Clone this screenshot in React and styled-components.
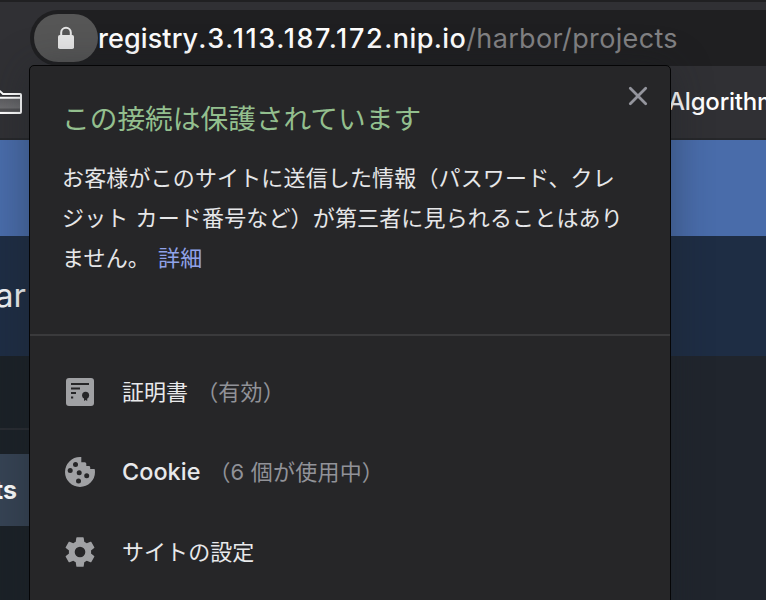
import React from "react";
import styled, { createGlobalStyle } from "styled-components";

const Global = createGlobalStyle`
  * { box-sizing: border-box; }
  body { margin: 0; background: #1f242b; overflow: hidden; }
`;

const jp = `"Noto Sans CJK JP", sans-serif`;
const latin = `Inter, "Noto Sans CJK JP", sans-serif`;

const Window = styled.div`
  position: relative;
  width: 766px;
  height: 600px;
  overflow: hidden;
  display: flex;
  flex-direction: column;
  font-family: ${latin};
  white-space: nowrap;
`;
const Toolbar = styled.header`
  flex: 0 0 66px;
  padding: 8px 0 0 30px;
  background: #303034;
  border-top: 2px solid #202022;
`;
const AddressBar = styled.div`
  display: flex;
  align-items: center;
  height: 56px;
  padding-left: 4px;
  border-radius: 28px 0 0 28px;
  background: #1f1f21;
`;
const SiteButton = styled.div`
  display: grid;
  place-items: center;
  flex: 0 0 64px;
  height: 48px;
  border-radius: 24px;
  background: #565656;
`;
const Url = styled.div`
  padding-top: 1px;
  font-size: 27px;
  line-height: 48px;
  color: #828284;
  letter-spacing: 0.35px;
`;
const Host = styled.span`
  color: #ffffff;
  font-weight: 500;
  letter-spacing: ${(p) => p.$spacing}px;
`;
const Bookmarks = styled.nav`
  display: flex;
  align-items: center;
  justify-content: space-between;
  flex: 0 0 74px;
  background: #303034;
  border-bottom: 2px solid #26272a;
`;
const BookmarkName = styled.span`
  width: 98px;
  overflow: hidden;
  font-size: 24px;
  line-height: 32px;
  font-weight: 500;
  color: #fff;
  letter-spacing: -0.2px;
`;
const Banner = styled.div`
  flex: 0 0 96px;
  background: #496caa;
`;
const AppHeader = styled.div`
  display: flex;
  align-items: center;
  flex: 0 0 120px;
  background: #1e2d44;
`;
const Brand = styled.span`
  display: flex;
  justify-content: flex-end;
  width: 26px;
  padding-bottom: 2px;
  font: 400 33px/40px Inter, sans-serif;
  color: #f2f3f5;
`;
const Workspace = styled.div`
  display: flex;
  flex: 1;
  background: #20252d;
`;
const Sidebar = styled.aside`
  width: 30px;
  background: #1b2127;
`;
const SidebarTop = styled.div`
  height: 74px;
  border-bottom: 2px solid #292c32;
`;
const SidebarItem = styled.div`
  display: flex;
  align-items: center;
  justify-content: flex-end;
  height: 72px;
  margin-top: 24px;
  padding-right: 13px;
  background: #364354;
  color: #fff;
  font: 700 25px/32px Inter, sans-serif;
`;
const Popup = styled.section`
  position: absolute;
  left: 29px;
  top: 65px;
  width: 642px;
  height: 640px;
  border: 1px solid #050506;
  border-radius: 5px;
  background: #262628;
  box-shadow: 0 4px 40px rgba(28, 34, 38, 0.42);
  font-family: ${jp};
`;
const Summary = styled.div`
  height: 270px;
  padding: 28px 20px 0 32px;
  border-bottom: 2px solid #3a3a3c;
`;
const TitleRow = styled.div`
  display: flex;
  justify-content: space-between;
  align-items: flex-start;
  height: 62px;
`;
const Title = styled.h1`
  margin: 0;
  font-size: 27.7px;
  line-height: 47px;
  font-weight: 400;
  color: #93bf8e;
`;
const Close = styled.svg`
  width: 24px;
  height: 24px;
  margin-top: -10px;
`;
const Line = styled.p`
  margin: 0;
  font-size: 22px;
  line-height: 40px;
  color: #e6e7e9;
  letter-spacing: 0.15px;
  word-spacing: ${(p) => p.$word || 0}px;
`;
const Link = styled.a`
  color: #90a2e8;
`;
const Items = styled.div`
  padding: 16px 0 0 34px;
`;
const Item = styled.div`
  display: flex;
  align-items: center;
  height: 80px;
  font: 400 22px/40px ${jp};
  color: #e8e9eb;
`;
const IconSlot = styled.svg`
  flex: none;
  width: 32px;
  height: 32px;
  margin-right: 26px;
  fill: #a0a1a4;
`;
const Name = styled.span`
  padding-bottom: ${(p) => (p.$latin ? 0 : 1)}px;
  font-family: ${latin};
  font-size: ${(p) => (p.$latin ? 23.4 : 22)}px;
  font-weight: ${(p) => (p.$latin ? 450 : 400)};
  letter-spacing: 0.05px;
`;
const Note = styled.span`
  margin-left: 8px;
  padding-bottom: 1px;
  font-family: ${latin};
  letter-spacing: 0.2px;
  color: #919298;
`;

const Lock = () => (
  <svg width="18" height="24" viewBox="0 0 18 24">
    <path d="M4.2 10V6.5a4.8 4.8 0 0 1 9.6 0V10" fill="none" stroke="#e6e6e6" strokeWidth="2" />
    <rect x="1" y="9" width="16" height="14" rx="1.8" fill="#e6e6e6" />
  </svg>
);

const Folder = () => (
  <svg width="24" height="30" viewBox="0 0 24 30">
    <defs>
      <linearGradient id="folder" x1="0" y1="0" x2="0" y2="1">
        <stop offset="0" stopColor="#5d5d60" />
        <stop offset="1" stopColor="#737376" />
      </linearGradient>
    </defs>
    <path d="M-2 11H21V26H-2Z" fill="url(#folder)" />
    <path d="M-2 23H21" stroke="#505053" strokeWidth="3" />
    <path d="M-2 4.2H0L3 7H20.2Q21 7 21 8V25Q21 26 20 26H-2M-2 10.8H21" fill="none" stroke="#fff" strokeWidth="2" />
  </svg>
);

const Certificate = () => (
  <IconSlot viewBox="0 0 32 32">
    <rect x="2" y="2" width="28" height="28" rx="3" />
    <path
      d="M7 8H25M7 12.5H16M7 17H12M7 21.5H9.2"
      fill="none"
      stroke="#262628"
      strokeWidth="2"
    />
    <circle cx="21.6" cy="19.3" r="3.5" fill="#262628" />
    <path d="M20 21H23.2V25L21.6 24L20 25Z" fill="#262628" />
  </IconSlot>
);

const Cookie = () => (
  <IconSlot viewBox="0 0 32 32">
    <path d="M16 1A15 15 0 1 0 31 16C31 14.8 30.9 13.8 30.6 12.9H26.2V11.3Q26.2 10 24.7 10H22.3V7.8Q22.3 6.3 20.8 6.3H17.3V1.1Z" />
    <g fill="#262628">
      <circle cx="11.5" cy="8.5" r="2.5" />
      <circle cx="6.2" cy="14.5" r="2.5" />
      <circle cx="15.2" cy="16.7" r="2.5" />
      <circle cx="22.7" cy="19.7" r="2.5" />
      <circle cx="14.5" cy="25" r="2.5" />
    </g>
  </IconSlot>
);

const Gear = () => (
  <IconSlot viewBox="1.2 1.2 21.6 21.6">
    <path d="M19.43 12.98c.04-.32.07-.64.07-.98s-.03-.66-.07-.98l2.11-1.65c.19-.15.24-.42.12-.64l-2-3.46c-.12-.22-.39-.3-.61-.22l-2.49 1c-.52-.4-1.08-.73-1.69-.98l-.38-2.65A.49.49 0 0 0 14 2h-4c-.25 0-.46.18-.49.42l-.38 2.65c-.61.25-1.17.59-1.69.98l-2.49-1c-.23-.09-.49 0-.61.22l-2 3.46c-.13.22-.07.49.12.64l2.11 1.65c-.04.32-.07.65-.07.98s.03.66.07.98l-2.11 1.65c-.19.15-.24.42-.12.64l2 3.46c.12.22.39.3.61.22l2.49-1c.52.4 1.08.73 1.69.98l.38 2.65c.03.24.24.42.49.42h4c.25 0 .46-.18.49-.42l.38-2.65c.61-.25 1.17-.59 1.69-.98l2.49 1c.23.09.49 0 .61-.22l2-3.46c.12-.22.07-.49-.12-.64l-2.11-1.65z" />
    <circle cx="12" cy="12" r="3.6" fill="#262628" />
  </IconSlot>
);

export default function App() {
  return (
    <Window>
      <Global />
      <Toolbar>
        <AddressBar>
          <SiteButton>
            <Lock />
          </SiteButton>
          <Url>
            <Host $spacing={0.1}>registry</Host>
            <Host $spacing={1.6}>.3.113.187.172</Host>
            <Host $spacing={0.4}>.nip.io</Host>
            /harbor/projects
          </Url>
        </AddressBar>
      </Toolbar>
      <Bookmarks>
        <Folder />
        <BookmarkName>Algorithm</BookmarkName>
      </Bookmarks>
      <Banner />
      <AppHeader>
        <Brand>ar</Brand>
      </AppHeader>
      <Workspace>
        <Sidebar>
          <SidebarTop />
          <SidebarItem>ts</SidebarItem>
        </Sidebar>
      </Workspace>
      <Popup>
        <Summary>
          <TitleRow>
            <Title>この接続は保護されています</Title>
            <Close viewBox="0 0 24 24">
              <path d="M4.3 4.3L19.7 19.7M19.7 4.3L4.3 19.7" stroke="#94959d" strokeWidth="2.8" strokeLinecap="round" />
            </Close>
          </TitleRow>
          <Line>お客様がこのサイトに送信した情報（パスワード、クレ</Line>
          <Line $word={2}>ジット カード番号など）が第三者に見られることはあり</Line>
          <Line $word={3}>
            ません。 <Link>詳細</Link>
          </Line>
        </Summary>
        <Items>
          <Item>
            <Certificate />
            <Name>証明書</Name>
            <Note>（有効）</Note>
          </Item>
          <Item>
            <Cookie />
            <Name $latin>Cookie</Name>
            <Note>（6 個が使用中）</Note>
          </Item>
          <Item>
            <Gear />
            <Name>サイトの設定</Name>
          </Item>
        </Items>
      </Popup>
    </Window>
  );
}
